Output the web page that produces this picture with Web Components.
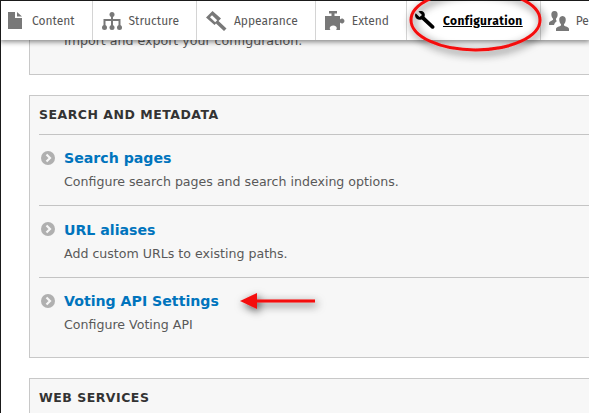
<!DOCTYPE html>
<html>
<head>
<meta charset="utf-8">
<title>Configuration</title>
<style>
html, body { margin: 0; padding: 0; height: 413px; overflow: hidden; background: #fff; }
body { border-left: 1px solid #1a1a1a; box-sizing: border-box; font-family: "DejaVu Sans", sans-serif; position: relative; }
</style>
</head>
<body>
<admin-toolbar>
  <toolbar-tab label="Content" class="first">
    <svg slot="icon" width="14" height="17" viewBox="0 0 14 17"><path fill="#787878" d="M0 0h7v6h7v11H0zM9 0l5 4.500H9z"/></svg>
  </toolbar-tab>
  <toolbar-tab label="Structure">
    <svg slot="icon" width="20" height="18" viewBox="0 0 20 18"><g fill="#787878"><circle cx="10" cy="2.500" r="2.500"/><circle cx="2.500" cy="15.500" r="2.500"/><circle cx="10" cy="15.500" r="2.500"/><circle cx="17.500" cy="15.500" r="2.500"/><path d="M9 3h2v4h7.500v7h-2V9H11v5H9V9H3.500v5h-2V7H9z"/></g></svg>
  </toolbar-tab>
  <toolbar-tab label="Appearance">
    <svg slot="icon" width="21" height="20" viewBox="0 0 21 20"><path fill="#787878" d="M6.500 0L15 7.500 12.500 10l8 7.500L18 20l-8-7.500L8.500 14 0 6.500z"/><path fill="#fff" d="M4 6.300L6 4.300l5.200 5-2 2z"/></svg>
  </toolbar-tab>
  <toolbar-tab label="Extend">
    <svg slot="icon" width="20" height="19" viewBox="0 0 20 19"><path fill="#787878" d="M4 0h8v2.500H9.500V5H15v3.500c1-1 2-1.300 3-.8 2 1 2 3.600 0 4.600-1 .5-2 .2-3-.8V19h-4c1-1 1-2.500 0-3.500-1.500-1.300-4-1.300-5.500 0-1 1-1 2.500 0 3.500H0V5h6.500V2.500H4z"/></svg>
  </toolbar-tab>
  <toolbar-tab label="Configuration" active>
    <svg slot="icon" width="20" height="20" viewBox="0 0 20 20"><path fill="#000" d="M1 2.500L4.500 6 7 4 3.500.5C6-.8 9 .2 9.700 3c.2 1 .1 2-.2 2.800l9.500 9c1.500 1.500-.8 4-2.500 2.600l-9.700-9c-3 1.300-6.300-.4-6.700-3.400-.1-.9 0-1.700.4-2.500z"/></svg>
  </toolbar-tab>
  <toolbar-tab label="People" class="last">
    <svg slot="icon" width="20" height="20" viewBox="0 0 20 20"><g fill="#787878"><path d="M5.500 0C8 0 9 2 8.600 4.300 8.300 6 7.800 7 7 7.800v1.500l1 .7C6.500 11 5.500 12 5 14H0v-2c0-1.500 3-2.500 4-3.300V7.800C3.200 7 2.700 6 2.400 4.300 2 2 3 0 5.500 0z"/><path d="M13.500 5c2.600 0 3.600 2.200 3.200 4.600-.3 1.700-.8 2.800-1.700 3.600v1.300c1 .9 5 1.500 5 3.500v2H7v-2c0-2 4-2.600 5-3.500v-1.300c-.9-.8-1.400-1.900-1.700-3.600C9.900 7.200 10.900 5 13.500 5z"/></g></svg>
  </toolbar-tab>
</admin-toolbar>

<admin-page>
  <admin-panel class="cut">
    <admin-item desc="Import and export your configuration." bare></admin-item>
  </admin-panel>
  <admin-panel heading="Search and metadata">
    <admin-item title-text="Search pages" desc="Configure search pages and search indexing options."></admin-item>
    <admin-item title-text="URL aliases" desc="Add custom URLs to existing paths."></admin-item>
    <admin-item title-text="Voting API Settings" desc="Configure Voting API"></admin-item>
  </admin-panel>
  <admin-panel heading="Web services"></admin-panel>
</admin-page>

<screenshot-marks></screenshot-marks>

<script>
// one entry of the admin toolbar, the icon comes in through the slot
class ToolbarTab extends HTMLElement {
  constructor() {
    super();
    this.attachShadow({ mode: "open" });
    this.shadowRoot.innerHTML = `
    <style>
      :host { display: flex; align-items: center; flex: none; height: 39px; padding: 0 17px 0 9px;
        border-right: 1px solid #d4d4d4; gap: 7px; font-size: 12px; color: #565656; }
      :host(.first) { padding-left: 7px; gap: 10px; }
      :host(.last) { border-right: 0; padding-left: 8px; gap: 7px; }
      :host([active]) { color: #000; font-weight: 700; padding-left: 8px; gap: 8px; letter-spacing: .4px; }
      :host([active]) span { text-decoration: underline; }
      ::slotted(svg) { display: block; flex: none; }
    </style>
    <slot name="icon"></slot><span></span>`;
    this.shadowRoot.querySelector("span").textContent = this.getAttribute("label");
  }
}
customElements.define("toolbar-tab", ToolbarTab);

class AdminToolbar extends HTMLElement {
  constructor() {
    super();
    this.attachShadow({ mode: "open" });
    this.shadowRoot.innerHTML = `
    <style>
      :host { display: flex; position: relative; z-index: 2; height: 39px; background: #fff;
        border-top: 1px solid #1a1a1a; font-family: "Fira Sans", "Noto Sans", sans-serif;
        box-shadow: 0 1px 5px 1px rgba(0,0,0,.45); }
    </style>
    <slot></slot>`;
  }
}
customElements.define("admin-toolbar", AdminToolbar);

class AdminPage extends HTMLElement {
  constructor() {
    super();
    this.attachShadow({ mode: "open" });
    this.shadowRoot.innerHTML = `
    <style>
      :host { display: flex; flex-direction: column; gap: 20px; padding-left: 28px; margin-right: -40px; }
    </style>
    <slot></slot>`;
  }
}
customElements.define("admin-page", AdminPage);

// grey box with an optional caps heading
class AdminPanel extends HTMLElement {
  constructor() {
    super();
    this.attachShadow({ mode: "open" });
    this.shadowRoot.innerHTML = `
    <style>
      :host { display: block; border: 1px solid #c8c8c8; background: #f7f7f7; padding: 0 0 8.500px 9px; }
      :host(.cut) { margin-top: -19px; height: 52px; padding-bottom: 0; overflow: hidden; }
      h2 { margin: 0; height: 38px; line-height: 38.800px; font-size: 12.500px; font-weight: 700; color: #333;
        text-transform: uppercase; letter-spacing: .5px; }
    </style>
    <h2></h2><slot></slot>`;
    const heading = this.getAttribute("heading");
    if (heading) this.shadowRoot.querySelector("h2").textContent = heading;
    else this.shadowRoot.querySelector("h2").remove();
  }
}
customElements.define("admin-panel", AdminPanel);

class AdminItem extends HTMLElement {
  constructor() {
    super();
    this.attachShadow({ mode: "open" });
    this.shadowRoot.innerHTML = `
    <style>
      :host { display: block; position: relative; height: 70.400px; border-top: 1px solid #c4c4c4; padding-left: 25px; }
      :host([bare]) { border-top: 0; height: auto; padding-top: 10px; }
      a { display: block; margin-top: 14.300px; height: 18px; line-height: 18px; font-size: 14.150px; font-weight: 700;
        color: #0074bd; text-decoration: none; }
      svg { position: absolute; left: 2px; top: 16px; }
      p { margin: 5.900px 0 0; line-height: 18px; font-size: 12.600px; color: #595959; }
      :host([bare]) p { margin: 0; }
    </style>
    <svg width="14" height="14" viewBox="0 0 14 14"><circle cx="7" cy="7" r="7" fill="#b0b0b0"/><path d="M5.500 3.500L9 7l-3.500 3.500" fill="none" stroke="#f7f7f7" stroke-width="2.200"/></svg>
    <a href="#"></a><p></p>`;
    const root = this.shadowRoot;
    if (this.hasAttribute("bare")) {
      root.querySelector("a").remove();
      root.querySelector("svg").remove();
    } else {
      root.querySelector("a").textContent = this.getAttribute("title-text");
    }
    root.querySelector("p").textContent = this.getAttribute("desc");
  }
}
customElements.define("admin-item", AdminItem);

// the red hand drawn marks lie over the page
class ScreenshotMarks extends HTMLElement {
  constructor() {
    super();
    this.attachShadow({ mode: "open" });
    this.shadowRoot.innerHTML = `
    <style>
      :host { position: absolute; left: -1px; top: 0; width: 589px; height: 413px; z-index: 5; pointer-events: none; }
      svg { display: block; overflow: hidden; }
    </style>
    <svg width="589" height="413" viewBox="0 0 589 413">
      <defs>
        <filter id="sh" x="-30%" y="-60%" width="160%" height="240%">
          <feDropShadow dx="2" dy="3" stdDeviation="4" flood-color="#000" flood-opacity=".7"/>
        </filter>
      </defs>
      <ellipse cx="475.500" cy="20" rx="64.500" ry="30" fill="none" stroke="#f40c0c" stroke-width="3" filter="url(#sh)"/>
      <path d="M240 301l17-8v6.500h58v3h-58v6.500z" fill="#f40c0c" filter="url(#sh)"/>
    </svg>`;
  }
}
customElements.define("screenshot-marks", ScreenshotMarks);
</script>
</body>
</html>
